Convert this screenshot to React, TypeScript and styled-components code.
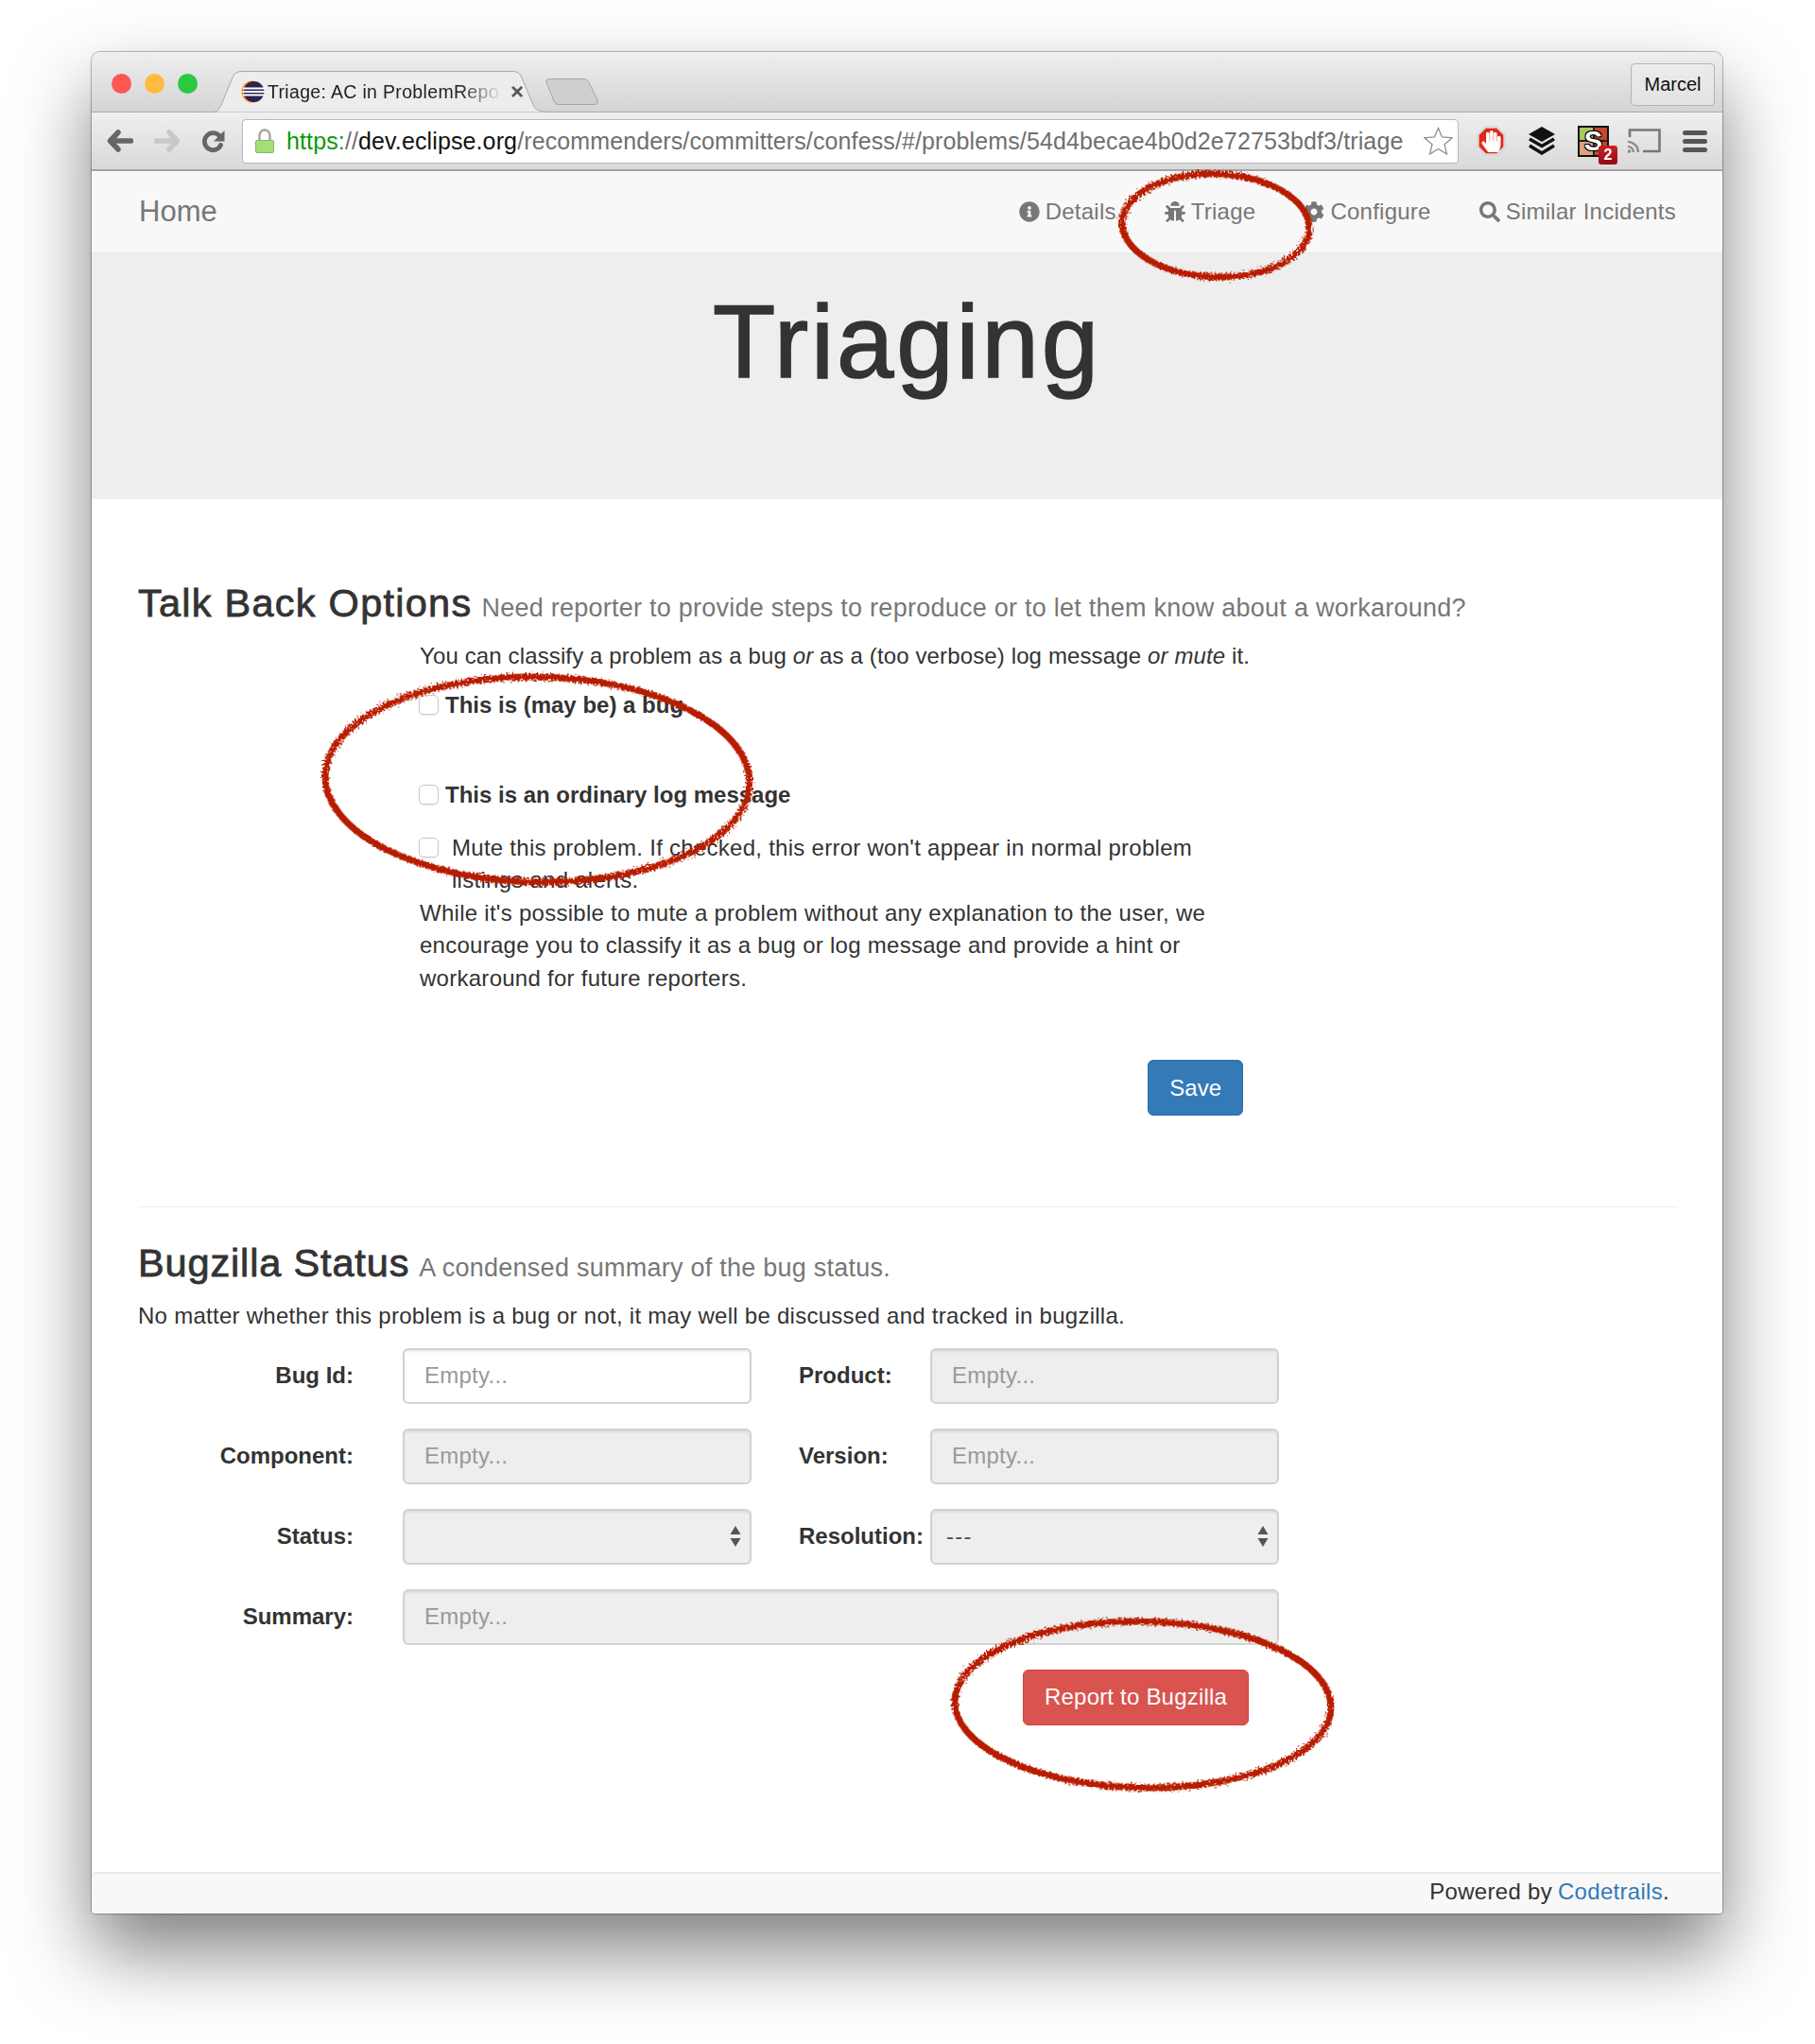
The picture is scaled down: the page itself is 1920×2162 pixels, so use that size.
import React from 'react'
import styled, { createGlobalStyle } from 'styled-components'
import { FaBug, FaCog, FaHandPaper, FaInfoCircle, FaSearch } from 'react-icons/fa'

const GlobalStyle = createGlobalStyle`
    html, body {
        margin: 0;
        background: #fff;
        font-family: "Liberation Sans", Arial, sans-serif;
        color: #333;
    }
    * { box-sizing: border-box; }
`

const Page = styled.div`
    width: 1920px;
    height: 2162px;
    padding: 55px 0 0 97px;
    overflow: hidden;
`
const FilterDefs = styled.svg`
    position: absolute;
    width: 0;
    height: 0;
`
const Browser = styled.div`
    position: relative;
    width: 1725px;
    height: 1969px;
    display: flex;
    flex-direction: column;
    border-radius: 9px 9px 4px 4px;
    background: #fff;
    box-shadow: 0 0 1px 1px rgba(0, 0, 0, 0.28), 0 40px 80px rgba(0, 0, 0, 0.5);
`
const TitleBar = styled.div`
    height: 64px;
    flex: none;
    display: flex;
    padding: 0 8px 0 21px;
    border-radius: 9px 9px 0 0;
    border-bottom: 1px solid #a8a8a8;
    background: linear-gradient(#efefef, #d4d4d4);
`
const Lights = styled.div`
    display: flex;
    gap: 14px;
    padding-top: 23px;
`
const Light = styled.span<{ $color: string }>`
    width: 21px;
    height: 21px;
    border-radius: 50%;
    background: ${p => p.$color};
`
const Tab = styled.div`
    position: relative;
    z-index: 1;
    width: 361px;
    height: 44px;
    margin: 20px 0 -1px 15px;
    display: flex;
    align-items: center;
    padding: 0 0 0 31px;
    flex: none;
`
const TabShape = styled.svg`
    position: absolute;
    inset: 0;
    z-index: -1;
`
const TabTitle = styled.span`
    width: 248px;
    margin-left: 3px;
    overflow: hidden;
    white-space: nowrap;
    font-size: 19.5px;
    letter-spacing: 0.33px;
    color: #222;
    -webkit-mask-image: linear-gradient(to right, #000 82%, transparent 100%);
    mask-image: linear-gradient(to right, #000 82%, transparent 100%);
`
const TabClose = styled.span`
    margin-left: 9px;
    font-size: 24px;
    font-weight: bold;
    line-height: 1;
    color: #555;
`
const NewTab = styled.svg`
    margin: 28px 0 0 -8px;
    flex: none;
`
const UserButton = styled.div`
    margin: 12px 0 0 auto;
    width: 89px;
    height: 45px;
    display: flex;
    align-items: center;
    justify-content: center;
    border: 1px solid #b4b4b4;
    border-radius: 4px;
    background: linear-gradient(#ececec, #e2e2e2);
    font-size: 20px;
    color: #111;
`
const ToolBar = styled.div`
    height: 62px;
    flex: none;
    display: flex;
    align-items: center;
    padding-left: 16px;
    border-bottom: 2px solid #a3a3a3;
    background: linear-gradient(#efefef, #d9d9d9);
`
const ToolIcon = styled.svg<{ $ml: number }>`
    margin-left: ${p => p.$ml}px;
    flex: none;
`
const UrlBar = styled.div`
    width: 1287px;
    height: 47px;
    margin-left: 18px;
    flex: none;
    display: flex;
    align-items: center;
    padding: 0 5px 0 13px;
    border: 1px solid #b9b9b9;
    border-radius: 4px;
    background: #fff;
`
const UrlText = styled.span`
    margin-left: 13px;
    flex: 1;
    white-space: nowrap;
    font-size: 25px;
    letter-spacing: 0.12px;
    color: #6f6f6f;
`
const UrlScheme = styled.span`
    color: #0a9a0a;
`
const UrlHost = styled.span`
    color: #111;
`
const StopBadge = styled.div`
    position: relative;
    width: 31px;
    height: 32px;
    margin-left: 19px;
    flex: none;
    display: flex;
    align-items: center;
    justify-content: center;
    color: #fff;
    font-size: 23px;
`
const StopShape = styled.svg`
    position: absolute;
    inset: 0;
`
const StopHand = styled(FaHandPaper)`
    position: relative;
`
const ScriptIcon = styled.div`
    position: relative;
    width: 33px;
    height: 33px;
    margin-left: 23px;
    flex: none;
    display: grid;
    grid-template-columns: 1fr 1fr;
    grid-template-rows: 1fr 1fr;
    gap: 2px;
    border: 2px solid #111;
    background: #222;
`
const ScriptPatch = styled.span<{ $color: string }>`
    background: ${p => p.$color};
`
const ScriptLetter = styled.span`
    position: absolute;
    inset: 0;
    display: flex;
    align-items: center;
    justify-content: center;
    font-size: 29px;
    font-weight: bold;
    color: #fff;
    text-shadow: 1px 1px 0 #000, -1px -1px 0 #000, 1px -1px 0 #000, -1px 1px 0 #000;
`
const CountBadge = styled.span`
    position: absolute;
    right: -11px;
    bottom: -10px;
    width: 20px;
    height: 20px;
    display: flex;
    align-items: center;
    justify-content: center;
    border-radius: 3px;
    background: linear-gradient(#d0202a, #8e0a12);
    font-size: 16px;
    font-weight: bold;
    color: #fff;
`
const NavBar = styled.nav`
    height: 87px;
    flex: none;
    display: flex;
    align-items: center;
    padding: 0 49px 0 50px;
    background: #f8f8f8;
    border-bottom: 1px solid #e7e7e7;
    color: #777;
`
const Brand = styled.span`
    font-size: 31px;
    margin-right: auto;
`
const NavLinks = styled.div`
    display: flex;
    gap: 51px;
`
const NavLink = styled.span`
    display: flex;
    align-items: center;
    gap: 6px;
    font-size: 24px;
    letter-spacing: 0.25px;
    white-space: nowrap;
`
const Jumbotron = styled.header`
    height: 260px;
    flex: none;
    padding-top: 34px;
    background: #eee;
    text-align: center;
`
const PageTitle = styled.h1`
    margin: 0;
    font-size: 108.5px;
    line-height: 1.1;
    font-weight: 500;
    letter-spacing: 2.9px;
    -webkit-text-stroke: 1.6px #333;
`
const Content = styled.main`
    flex: 1;
    padding: 84px 47px 0 49px;
`
const SectionHeading = styled.h2`
    margin: 0;
    font-size: 41.5px;
    line-height: 52px;
    font-weight: 500;
    white-space: nowrap;
    letter-spacing: 1.25px;
    -webkit-text-stroke: 0.8px #333;
`
const HeadingNote = styled.small`
    margin-left: 10px;
    font-size: 27px;
    font-weight: 400;
    letter-spacing: 0.25px;
    color: #777;
    -webkit-text-stroke: 0;
`
const TalkBackForm = styled.section`
    width: 871px;
    margin: 8px 0 0 298px;
    font-size: 24px;
    line-height: 34.5px;
`
const Para = styled.p<{ $tight?: boolean }>`
    margin: 0;
    font-size: 24px;
    line-height: 34.5px;
    letter-spacing: ${p => (p.$tight ? '0.13px' : '0.27px')};
    white-space: ${p => (p.$tight ? 'nowrap' : 'normal')};
`
const CheckRow = styled.label<{ $top: number }>`
    display: flex;
    align-items: flex-start;
    margin-top: ${p => p.$top}px;
    font-weight: bold;
`
const MuteRow = styled.label`
    display: flex;
    align-items: flex-start;
    margin-top: 21px;
    letter-spacing: 0.27px;
`
const Check = styled.input.attrs({ type: 'checkbox' })`
    appearance: none;
    width: 21px;
    height: 21px;
    margin: 6px 7px 0 -1px;
    flex: none;
    border: 1.5px solid #c8c8c8;
    border-radius: 5px;
    background: #fff;
    box-shadow: 0 1px 1px rgba(0, 0, 0, 0.08);
`
const MuteText = styled.span`
    padding-left: 7px;
    padding-right: 20px;
`
const SaveRow = styled.div`
    display: flex;
    justify-content: flex-end;
    margin-top: 69px;
`
const Btn = styled.button<{ $kind: 'primary' | 'danger' }>`
    height: 59px;
    padding: 0 22px;
    border: 1px solid ${p => (p.$kind === 'primary' ? '#2e6da4' : '#d43f3a')};
    border-radius: 6px;
    background: ${p => (p.$kind === 'primary' ? '#337ab7' : '#d9534f')};
    color: #fff;
    font: 24px "Liberation Sans", Arial, sans-serif;
    letter-spacing: ${p => (p.$kind === 'primary' ? '0' : '0.2px')};
`
const Divider = styled.hr`
    margin: 96px 0 0;
    border: 0;
    border-top: 1px solid #eee;
`
const BugzillaHeading = styled(SectionHeading)`
    margin-top: 33px;
    letter-spacing: 0.85px;
`
const BugzillaIntro = styled(Para)`
    margin-top: 8px;
`
const FieldGrid = styled.div`
    display: grid;
    grid-template-columns: 280px 419px 139px 369px;
    row-gap: 26px;
    margin-top: 16px;
    font-size: 24px;
`
const FieldLabel = styled.label<{ $side: 'left' | 'right' }>`
    align-self: center;
    font-weight: bold;
    white-space: nowrap;
    text-align: ${p => (p.$side === 'left' ? 'right' : 'left')};
    padding-right: ${p => (p.$side === 'left' ? '52px' : '0')};
`
const TextField = styled.input<{ $wide?: boolean; $narrow?: boolean }>`
    height: 59px;
    width: ${p => (p.$narrow ? '369px' : '100%')};
    grid-column: ${p => (p.$wide ? 'span 3' : 'auto')};
    padding: 0 21px;
    border: 2px solid #d2d2d2;
    border-radius: 6px;
    background: #fff;
    box-shadow: inset 0 2px 2px rgba(0, 0, 0, 0.075);
    font: 24px "Liberation Sans", Arial, sans-serif;
    letter-spacing: 0.25px;
    outline: none;
    &:disabled { background: #eee; }
    &::placeholder { color: #999; opacity: 1; }
`
const SelectBox = styled.div<{ $narrow?: boolean }>`
    height: 59px;
    width: ${p => (p.$narrow ? '369px' : '100%')};
    display: flex;
    align-items: center;
    justify-content: space-between;
    padding: 0 9px 0 15px;
    border: 2px solid #d2d2d2;
    border-radius: 6px;
    background: #eee;
    box-shadow: inset 0 2px 2px rgba(0, 0, 0, 0.075);
    letter-spacing: 1.2px;
    color: #555;
`
const ReportRow = styled.div`
    margin: 26px 0 0 936px;
`
const Footer = styled.footer`
    height: 44px;
    flex: none;
    display: flex;
    align-items: center;
    justify-content: flex-end;
    padding: 0 56px 5px 0;
    border-top: 2px solid #e7e7e7;
    border-radius: 5px 5px 4px 4px;
    background: #f8f8f8;
    font-size: 24px;
    letter-spacing: 0.3px;
`
const FooterLink = styled.a`
    margin-left: 6px;
    color: #337ab7;
`
const Scribble = styled.svg<{ $left: number; $top: number }>`
    position: absolute;
    left: ${p => p.$left}px;
    top: ${p => p.$top}px;
    z-index: 5;
    overflow: visible;
    pointer-events: none;
`

const RedCircle = ({ x, y, w, h, tilt }: { x: number; y: number; w: number; h: number; tilt: number }) => (
    <Scribble $left={x - 97} $top={y - 55} width={w} height={h} viewBox={`0 0 ${w} ${h}`}>
        <ellipse
            cx={w / 2}
            cy={h / 2}
            rx={w / 2 - 4}
            ry={h / 2 - 4}
            fill="none"
            stroke="#b81c06"
            strokeWidth={7}
            filter="url(#rough)"
            transform={`rotate(${tilt} ${w / 2} ${h / 2})`}
        />
    </Scribble>
)

const SelectArrows = () => (
    <svg width="12" height="22" viewBox="0 0 12 22">
        <path d="M6 0L11.500 9H.5z M6 22L.5 13h11z" fill="#555" />
    </svg>
)

const App = () => {
    return (
        <Page>
            <GlobalStyle />
            <FilterDefs>
                <filter id="rough" x="-10%" y="-10%" width="120%" height="120%">
                    <feTurbulence type="fractalNoise" baseFrequency="0.5" numOctaves="3" seed="4" />
                    <feDisplacementMap in="SourceGraphic" scale="9" />
                </filter>
            </FilterDefs>
            <Browser>
                <TitleBar>
                    <Lights>
                        <Light $color="#fc5753" />
                        <Light $color="#fdbc40" />
                        <Light $color="#29c940" />
                    </Lights>
                    <Tab>
                        <TabShape width="361" height="44" viewBox="0 0 361 44">
                            <path d="M0 43.500C6 43.500 8 41 10 36L22 7C24 2 27 .5 32 .5H318C323 .5 326 2 328 7L340 36C342 41 345 43.500 361 43.500" fill="#ededed" stroke="#a8a8a8" />
                        </TabShape>
                        <svg width="25" height="24" viewBox="0 0 25 24">
                            <circle cx="12" cy="12" r="11.500" fill="#f7941e" />
                            <circle cx="13.500" cy="12" r="11" fill="#2c2255" />
                            <path d="M2 8.500h23M1.500 12h23.500M2 15.500h23" stroke="#fff" strokeWidth="1.800" />
                        </svg>
                        <TabTitle>Triage: AC in ProblemRepo</TabTitle>
                        <TabClose>×</TabClose>
                    </Tab>
                    <NewTab width="56" height="28" viewBox="0 0 56 28">
                        <path d="M1 4C.5 2 2 .5 4 .5H40C43 .5 45 2 46 4L55 23C56 25.500 55 27.500 52 27.500H14C11 27.500 10 26 9 24z" fill="#cfcfcf" stroke="#a5a5a5" />
                    </NewTab>
                    <UserButton>Marcel</UserButton>
                </TitleBar>
                <ToolBar>
                    <ToolIcon $ml={0} width="28" height="24" viewBox="0 0 28 24">
                        <path d="M12 3L3.500 12l8.500 9M5 12h20.500" fill="none" stroke="#666" strokeWidth="5.500" strokeLinecap="round" strokeLinejoin="round" />
                    </ToolIcon>
                    <ToolIcon $ml={22} width="28" height="24" viewBox="0 0 28 24">
                        <path d="M16 3l8.500 9-8.500 9M23 12H2.500" fill="none" stroke="#c8c8c8" strokeWidth="5.500" strokeLinecap="round" strokeLinejoin="round" />
                    </ToolIcon>
                    <ToolIcon $ml={23} width="24" height="25" viewBox="0 0 24 25">
                        <path d="M19.500 16.500a9 9 0 1 1-.8-9" fill="none" stroke="#666" strokeWidth="4.800" strokeLinecap="round" />
                        <path d="M23.500 1v11.500H12z" fill="#666" />
                    </ToolIcon>
                    <UrlBar>
                        <svg width="20" height="26" viewBox="0 0 20 26">
                            <path d="M4.500 14V7a5.500 5.500 0 0 1 11 0v7" fill="none" stroke="#a5a5a5" strokeWidth="2.400" />
                            <rect x="0.500" y="12.500" width="19" height="13" rx="1.500" fill="#a4de78" stroke="#86b860" />
                        </svg>
                        <UrlText>
                            <UrlScheme>https:</UrlScheme>//<UrlHost>dev.eclipse.org</UrlHost>/recommenders/committers/confess/#/problems/54d4becae4b0d2e72753bdf3/triage
                        </UrlText>
                        <svg width="31" height="30" viewBox="0 0 31 30">
                            <path d="M15.500 1.500l4 9.500 10.500.9-8 6.800 2.500 10.300-9-5.500-9 5.500 2.500-10.300-8-6.800 10.500-.9z" fill="#fff" stroke="#8f8f8f" strokeWidth="1.300" />
                        </svg>
                    </UrlBar>
                    <StopBadge>
                        <StopShape width="31" height="32" viewBox="0 0 31 32">
                            <path d="M9.500 1.500h12l8 8v13l-8 8h-12l-8-8v-13z" fill="#e3261b" stroke="#d8d8d8" strokeWidth="2.400" strokeLinejoin="round" />
                        </StopShape>
                        <StopHand />
                    </StopBadge>
                    <ToolIcon $ml={23} width="30" height="30" viewBox="0 0 30 30">
                        <path d="M15 0l14 8-14 8L1 8z" fill="#111" />
                        <path d="M2 13l13 7.500L28 13M2 20l13 8L28 20" fill="none" stroke="#111" strokeWidth="3.500" />
                    </ToolIcon>
                    <ScriptIcon>
                        <ScriptPatch $color="#a9c95f" />
                        <ScriptPatch $color="#c8452f" />
                        <ScriptPatch $color="#dba37c" />
                        <ScriptPatch $color="#c8452f" />
                        <ScriptLetter>S</ScriptLetter>
                        <CountBadge>2</CountBadge>
                    </ScriptIcon>
                    <ToolIcon $ml={20} width="35" height="26" viewBox="0 0 35 26">
                        <path d="M2 9V1.500h31.500v22.500H16" fill="none" stroke="#777" strokeWidth="2.600" />
                        <path d="M0 14a11 11 0 0 1 11 11M0 19a6 6 0 0 1 6 6" fill="none" stroke="#888" strokeWidth="2.200" />
                        <circle cx="1.500" cy="24" r="1.800" fill="#888" />
                    </ToolIcon>
                    <ToolIcon $ml={23} width="26" height="23" viewBox="0 0 26 23">
                        <rect width="26" height="5" rx="2.500" fill="#555" />
                        <rect y="9" width="26" height="5" rx="2.500" fill="#555" />
                        <rect y="18" width="26" height="5" rx="2.500" fill="#555" />
                    </ToolIcon>
                </ToolBar>
                <NavBar>
                    <Brand>Home</Brand>
                    <NavLinks>
                        <NavLink><FaInfoCircle size={22} />Details</NavLink>
                        <NavLink><FaBug size={22} />Triage</NavLink>
                        <NavLink><FaCog size={22} />Configure</NavLink>
                        <NavLink><FaSearch size={22} />Similar Incidents</NavLink>
                    </NavLinks>
                </NavBar>
                <Jumbotron>
                    <PageTitle>Triaging</PageTitle>
                </Jumbotron>
                <Content>
                    <SectionHeading>
                        Talk Back Options
                        <HeadingNote>Need reporter to provide steps to reproduce or to let them know about a workaround?</HeadingNote>
                    </SectionHeading>
                    <TalkBackForm>
                        <Para $tight>You can classify a problem as a bug <em>or</em> as a (too verbose) log message <em>or mute</em> it.</Para>
                        <CheckRow $top={17}>
                            <Check />
                            This is (may be) a bug
                        </CheckRow>
                        <CheckRow $top={61}>
                            <Check />
                            This is an ordinary log message
                        </CheckRow>
                        <MuteRow>
                            <Check />
                            <MuteText>Mute this problem. If checked, this error won't appear in normal problem listings and alerts.</MuteText>
                        </MuteRow>
                        <Para>While it's possible to mute a problem without any explanation to the user, we encourage you to classify it as a bug or log message and provide a hint or workaround for future reporters.</Para>
                        <SaveRow>
                            <Btn $kind="primary">Save</Btn>
                        </SaveRow>
                    </TalkBackForm>
                    <Divider />
                    <BugzillaHeading>
                        Bugzilla Status
                        <HeadingNote>A condensed summary of the bug status.</HeadingNote>
                    </BugzillaHeading>
                    <BugzillaIntro>No matter whether this problem is a bug or not, it may well be discussed and tracked in bugzilla.</BugzillaIntro>
                    <FieldGrid>
                        <FieldLabel $side="left">Bug Id:</FieldLabel>
                        <TextField $narrow placeholder="Empty..." />
                        <FieldLabel $side="right">Product:</FieldLabel>
                        <TextField disabled placeholder="Empty..." />
                        <FieldLabel $side="left">Component:</FieldLabel>
                        <TextField $narrow disabled placeholder="Empty..." />
                        <FieldLabel $side="right">Version:</FieldLabel>
                        <TextField disabled placeholder="Empty..." />
                        <FieldLabel $side="left">Status:</FieldLabel>
                        <SelectBox $narrow><span /><SelectArrows /></SelectBox>
                        <FieldLabel $side="right">Resolution:</FieldLabel>
                        <SelectBox><span>---</span><SelectArrows /></SelectBox>
                        <FieldLabel $side="left">Summary:</FieldLabel>
                        <TextField $wide disabled placeholder="Empty..." />
                    </FieldGrid>
                    <ReportRow>
                        <Btn $kind="danger">Report to Bugzilla</Btn>
                    </ReportRow>
                </Content>
                <Footer>
                    Powered by<FooterLink>Codetrails</FooterLink>.
                </Footer>
                <RedCircle x={1183} y={180} w={206} h={117} tilt={2} />
                <RedCircle x={340} y={712} w={457} h={225} tilt={1} />
                <RedCircle x={1006} y={1711} w={406} h={184} tilt={1} />
            </Browser>
        </Page>
    )
}

export default App
